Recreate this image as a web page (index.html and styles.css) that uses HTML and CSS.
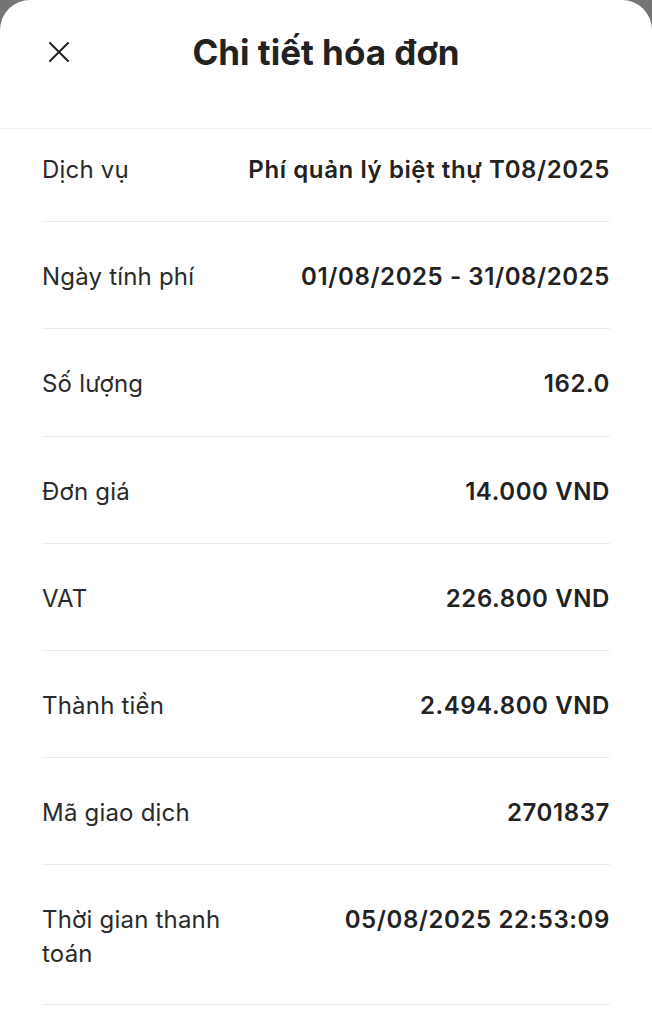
FILE: index.html
```html
<!DOCTYPE html>
<html lang="vi">
<head>
<meta charset="utf-8">
<link rel="stylesheet" href="styles.css">
</head>
<body>
<div class="sheet">
  <header class="header">
    <button class="close" aria-label="Đóng">
      <svg width="22" height="22" viewBox="0 0 22 22" fill="none" stroke="#222" stroke-width="2" stroke-linecap="round">
        <path d="M2 2 L20 20 M20 2 L2 20"/>
      </svg>
    </button>
    <h1 class="title">Chi tiết hóa đơn</h1>
  </header>
  <div class="list">
    <div class="row"><span class="label">Dịch vụ</span><span class="value">Phí quản lý biệt thự T08/2025</span></div>
    <div class="row"><span class="label">Ngày tính phí</span><span class="value">01/08/2025 - 31/08/2025</span></div>
    <div class="row"><span class="label">Số lượng</span><span class="value">162.0</span></div>
    <div class="row"><span class="label">Đơn giá</span><span class="value">14.000 VND</span></div>
    <div class="row"><span class="label">VAT</span><span class="value">226.800 VND</span></div>
    <div class="row"><span class="label">Thành tiền</span><span class="value">2.494.800 VND</span></div>
    <div class="row"><span class="label">Mã giao dịch</span><span class="value">2701837</span></div>
    <div class="row"><span class="label">Thời gian thanh toán</span><span class="value">05/08/2025 22:53:09</span></div>
  </div>
</div>
</body>
</html>
```
FILE: styles.css
```css
* { box-sizing: border-box; }
html, body { margin: 0; padding: 0; }
body {
  background: #747474;
  font-family: Inter, "Noto Sans", sans-serif;
  color: #222;
  width: 652px;
  height: 1024px;
  overflow: hidden;
}
.sheet {
  background: #fff;
  border-radius: 30px 30px 0 0;
  min-height: 1024px;
}
.header {
  position: relative;
  height: 129px;
  border-bottom: 1px solid #f0f0f0;
  display: flex;
  align-items: center;
  justify-content: center;
  padding-bottom: 24px;
}
.close {
  position: absolute;
  left: 48px;
  top: 41px;
  width: 22px;
  height: 22px;
  padding: 0;
  border: 0;
  background: none;
  display: flex;
}
.title {
  margin: 0;
  font-size: 35px;
  font-weight: 700;
  line-height: 40px;
  color: #222;
}
.list {
  padding: 0 42px;
}
.row {
  display: flex;
  justify-content: space-between;
  align-items: flex-start;
  gap: 24px;
  padding: 38px 0 34.2px;
  border-bottom: 1px solid #ebebeb;
  font-size: 24px;
  line-height: 34px;
}
.row:first-child { padding-top: 24px; }
.row:last-child { padding-bottom: 32.5px; }
.label {
  color: #2a2a2a;
  font-weight: 400;
  max-width: 205px;
  letter-spacing: 0.2px;
}
.value {
  font-weight: 600;
  text-align: right;
  color: #222;
  white-space: nowrap;
  letter-spacing: 0.6px;
}
```
